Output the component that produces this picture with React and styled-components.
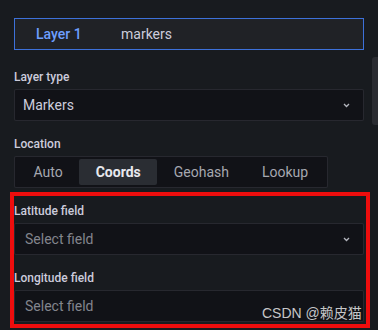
import React from "react";
import styled, { createGlobalStyle } from "styled-components";

const GlobalStyle = createGlobalStyle`
  html, body {
    margin: 0;
    padding: 0;
    background: #181b1f;
  }
  body {
    font-family: Roboto, "Liberation Sans", sans-serif;
    color: #ccccdc;
  }
`;

const Page = styled.div`
  position: relative;
  width: 378px;
  height: 330px;
  overflow: hidden;
  background: #181b1f;
  box-sizing: border-box;
  padding: 18px 14px 0 14px;
`;

const Column = styled.div`
  width: 350px;
  display: flex;
  flex-direction: column;
`;

const LayerRow = styled.div`
  display: flex;
  align-items: center;
  height: 32px;
  box-sizing: border-box;
  border: 1px solid #3d71d9;
  background: #202226;
  padding-left: 21px;
  margin-bottom: 19px;
  font-size: 14px;
`;

const LayerName = styled.span`
  color: #6e9fff;
  font-weight: 500;
  width: 85px;
`;

const LayerType = styled.span`
  color: #ccccdc;
`;

const Field = styled.div`
  display: flex;
  flex-direction: column;
  margin-bottom: 15px;
`;

const Label = styled.label`
  font-size: 12px;
  font-weight: 500;
  line-height: 16px;
  color: #ccccdc;
  margin-bottom: 4px;
`;

const SelectBox = styled.div`
  display: flex;
  align-items: center;
  justify-content: space-between;
  height: 32px;
  box-sizing: border-box;
  border: 1px solid rgba(204, 204, 220, 0.12);
  border-radius: 2px;
  background: #111217;
  padding: 0 13px 0 ${(p) => (p.$placeholder ? 10 : 8)}px;
  font-size: 14px;
  color: ${(p) => (p.$placeholder ? "#83858d" : "#ccccdc")};
`;

const Radio = styled.div`
  display: inline-flex;
  align-self: flex-start;
  height: 32px;
  box-sizing: border-box;
  border: 1px solid rgba(204, 204, 220, 0.12);
  border-radius: 2px;
  background: #111217;
  padding: 2px;
`;

const RadioButton = styled.div`
  display: flex;
  align-items: center;
  padding: 0 16.5px;
  font-size: 14px;
  border-radius: 2px;
  color: ${(p) => (p.$active ? "#e8e8ee" : "#a6a8b0")};
  font-weight: ${(p) => (p.$active ? 700 : 400)};
  background: ${(p) => (p.$active ? "#2a2d33" : "transparent")};
`;

const Highlight = styled.div`
  position: absolute;
  left: 10px;
  top: 192px;
  width: 360px;
  height: 136px;
  box-sizing: border-box;
  border: 4px solid #ee0d0d;
  pointer-events: none;
`;

const Scrollbar = styled.div`
  position: absolute;
  right: 0;
  top: 57px;
  width: 6px;
  height: 68px;
  border-radius: 3px 0 0 3px;
  background: #2a2c31;
`;

const Watermark = styled.div`
  position: absolute;
  left: 262px;
  top: 302px;
  font-family: "Liberation Sans", "Noto Sans CJK SC", sans-serif;
  font-size: 14px;
  color: #c6c6c8;
  white-space: nowrap;
`;

const Chevron = () => (
  <svg width="7" height="5" viewBox="0 0 7 5">
    <path d="M1 1l2.5 2.5L6 1" fill="none" stroke="#b4b6be" strokeWidth="1.3" />
  </svg>
);

const Select = ({ value, placeholder, arrow = true }) => (
  <SelectBox $placeholder={!value}>
    <span>{value || placeholder}</span>
    {arrow && <Chevron />}
  </SelectBox>
);

export default function App() {
  const modes = ["Auto", "Coords", "Geohash", "Lookup"];
  return (
    <>
      <GlobalStyle />
      <Page>
        <Column>
          <LayerRow>
            <LayerName>Layer 1</LayerName>
            <LayerType>markers</LayerType>
          </LayerRow>
          <Field>
            <Label>Layer type</Label>
            <Select value="Markers" />
          </Field>
          <Field>
            <Label>Location</Label>
            <Radio>
              {modes.map((m) => (
                <RadioButton key={m} $active={m === "Coords"}>
                  {m}
                </RadioButton>
              ))}
            </Radio>
          </Field>
          <Field>
            <Label>Latitude field</Label>
            <Select placeholder="Select field" />
          </Field>
          <Field>
            <Label>Longitude field</Label>
            <Select placeholder="Select field" arrow={false} />
          </Field>
        </Column>
        <Scrollbar />
        <Highlight />
        <Watermark>CSDN @赖皮猫</Watermark>
      </Page>
    </>
  );
}
